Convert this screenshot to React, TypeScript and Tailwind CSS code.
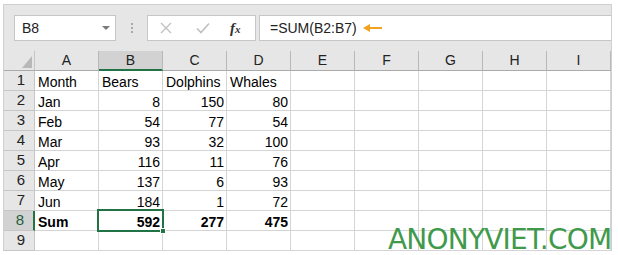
import React from "react";

const cols = ["A", "B", "C", "D", "E", "F", "G", "H", "I"];
const data: (string | number)[][] = [
  ["Month", "Bears", "Dolphins", "Whales"],
  ["Jan", 8, 150, 80],
  ["Feb", 54, 77, 54],
  ["Mar", 93, 32, 100],
  ["Apr", 116, 11, 76],
  ["May", 137, 6, 93],
  ["Jun", 184, 1, 72],
  ["Sum", 592, 277, 475],
  [],
];

export default function App() {
  return (
    <div
      className="relative w-[618px] h-[255px] bg-white overflow-hidden text-black"
      style={{ fontFamily: '"Liberation Sans", Arial, sans-serif' }}
    >
      <div className="ml-[3px] mt-[4px] w-[609px] h-[247px] bg-[#e6e6e6] border-l border-t border-r border-[#d0d0d0] flex flex-col">
        {/* formula bar area */}
        <div className="h-[46px] flex items-start pt-[10px] pl-[10px]">
          <div className="w-[102px] h-[26px] bg-white border border-[#c6c6c6] flex items-center pl-[7px] pr-[5px] text-[14px] text-[#222]">
            <span className="flex-1">B8</span>
            <svg width="8" height="5" viewBox="0 0 8 5">
              <polygon points="0,0 8,0 4,4" fill="#7a7a7a" />
            </svg>
          </div>
          <div className="w-[31px] h-[26px] flex flex-col items-center justify-center gap-[2px]">
            <div className="w-[2px] h-[2px] bg-[#a8a8a8]" />
            <div className="w-[2px] h-[2px] bg-[#a8a8a8]" />
            <div className="w-[2px] h-[2px] bg-[#a8a8a8]" />
          </div>
          <div className="w-[109px] h-[26px] bg-white border border-[#c6c6c6] flex items-center">
            <svg width="12" height="12" viewBox="0 0 12 12" className="ml-[12px]">
              <path d="M1 1 L11 11 M11 1 L1 11" stroke="#c0c0c0" strokeWidth="1.3" />
            </svg>
            <svg width="14" height="12" viewBox="0 0 14 12" className="ml-[24px]">
              <path d="M1 6.5 L5 10.5 L13 1.5" stroke="#c0c0c0" strokeWidth="1.6" fill="none" />
            </svg>
            <span
              className="ml-[20px] text-[15px] italic text-[#333] font-semibold"
              style={{ fontFamily: '"Liberation Serif", serif' }}
            >
              f<span className="text-[11px]">x</span>
            </span>
          </div>
          <div className="ml-[3px] flex-1 h-[26px] bg-white border-t border-b border-l border-[#c6c6c6] flex items-center pl-[10px] text-[14px] text-[#222]">
            <span>=SUM(B2:B7)</span>
            <svg width="20" height="10" viewBox="0 0 20 10" className="ml-[6px]">
              <path d="M2 5 L19 5" stroke="#f4a020" strokeWidth="2" />
              <polygon points="0,5 7,1 7,9" fill="#f4a020" />
            </svg>
          </div>
        </div>
        {/* grid */}
        <div className="grid grid-cols-[31px_repeat(9,64px)] text-[14px]">
          <div className="h-5 bg-[#e6e6e6] border-r border-b border-r-[#c6c6c6] border-b-[#ababab] flex items-end justify-end pr-[2px] pb-[2px]">
            <svg width="10" height="12" viewBox="0 0 10 12">
              <polygon points="10,0 10,12 0,12" fill="#b8b8b8" />
            </svg>
          </div>
          {cols.map((c) => (
            <div
              key={c}
              className={
                c === "B"
                  ? "h-5 bg-[#d2d2d2] border-r border-b-2 border-r-[#b9b9b9] border-b-[#217346] flex items-center justify-center text-[#222]"
                  : "h-5 bg-[#e6e6e6] border-r border-b border-r-[#b9b9b9] border-b-[#ababab] flex items-center justify-center text-[#222]"
              }
            >
              {c}
            </div>
          ))}
          {data.map((row, r) => (
            <React.Fragment key={r}>
              <div
                className={
                  r === 7
                    ? "h-5 bg-[#d2d2d2] border-r-2 border-b border-r-[#217346] border-b-[#c6c6c6] flex items-center justify-center pl-[3px] text-[15px] text-[#1f5f3a]"
                    : "h-5 bg-[#e6e6e6] border-r border-b border-[#c6c6c6] flex items-center justify-center pl-[4px] text-[15px] text-[#222]"
                }
              >
                {r + 1}
              </div>
              {cols.map((c, ci) => {
                const v = row[ci];
                const isNum = typeof v === "number";
                return (
                  <div
                    key={c}
                    className={
                      "h-5 bg-white border-r border-b border-[#d4d4d4] leading-[20px] whitespace-nowrap overflow-visible pt-[1px] " +
                      (isNum ? "text-right pr-[2px] " : "text-left pl-[3px] ") +
                      (r === 7 ? "font-bold" : "")
                    }
                  >
                    {v ?? ""}
                  </div>
                );
              })}
            </React.Fragment>
          ))}
        </div>
      </div>

      {/* selection */}
      <div className="absolute left-[97px] top-[209px] w-[67px] h-[23px] border-2 border-[#217346]" />
      <div className="absolute left-[160px] top-[228px] w-[6px] h-[6px] bg-[#217346] border border-white" />

      {/* watermark */}
      <div
        className="absolute left-[388px] top-[225px] text-[28px] leading-[30px] tracking-[-0.8px] text-[#3f9a4c] whitespace-nowrap"
        style={{ fontFamily: '"DejaVu Sans", sans-serif' }}
      >
        ANONYVIET.COM
      </div>
    </div>
  );
}
